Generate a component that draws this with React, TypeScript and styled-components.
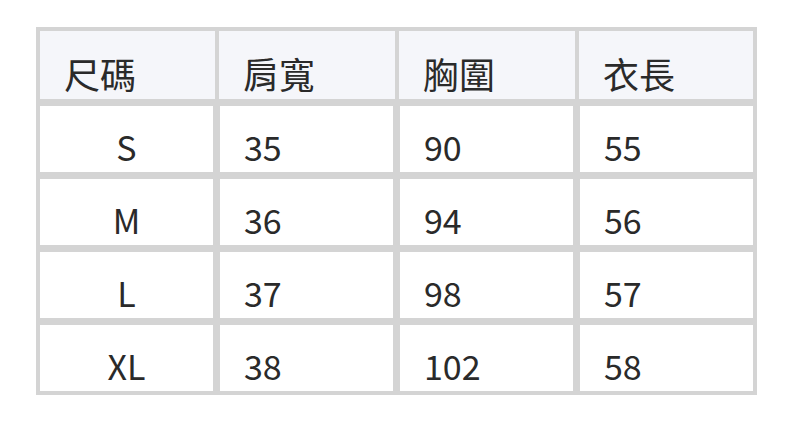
import styled, { createGlobalStyle } from 'styled-components'

const GlobalStyle = createGlobalStyle`
  html, body {
    margin: 0;
    padding: 0;
    background: #ffffff;
  }
  body {
    font-family: "Noto Sans CJK TC", "Noto Sans", sans-serif;
    color: #2a2a2a;
  }
`

const Page = styled.div`
  width: 792px;
  height: 422px;
  padding: 27px 0 0 36px;
  box-sizing: border-box;
`

const Frame = styled.div`
  width: 721px;
  box-sizing: border-box;
  background: #d4d4d4;
  padding: 4px;
  display: flex;
  flex-direction: column;
  gap: 7px;
`

const HeaderRow = styled.div`
  display: grid;
  grid-template-columns: 175px 176px 176px 174px;
  gap: 4px;
`

const BodyRow = styled.div`
  display: grid;
  grid-template-columns: repeat(4, 173px);
  gap: 7px;
`

const HeadCell = styled.div`
  height: 68px;
  box-sizing: border-box;
  background: #f5f6fa;
  display: flex;
  align-items: flex-end;
  padding: 0 0 0 24px;
  font-size: 36px;
  line-height: normal;
`

const Cell = styled.div<{ center?: boolean }>`
  height: 66px;
  box-sizing: border-box;
  background: #ffffff;
  display: flex;
  align-items: flex-end;
  justify-content: ${p => (p.center ? 'center' : 'flex-start')};
  padding: ${p => (p.center ? '0 0 1px 0' : '0 0 1px 24px')};
  font-size: 34px;
  line-height: normal;
`

const headers = ['尺碼', '肩寬', '胸圍', '衣長']

const rows = [
  ['S', '35', '90', '55'],
  ['M', '36', '94', '56'],
  ['L', '37', '98', '57'],
  ['XL', '38', '102', '58'],
]

export default function App() {
  return (
    <>
      <GlobalStyle />
      <Page>
        <Frame>
          <HeaderRow>
            {headers.map(h => (
              <HeadCell key={h}>{h}</HeadCell>
            ))}
          </HeaderRow>
          {rows.map(row => (
            <BodyRow key={row[0]}>
              {row.map((value, i) => (
                <Cell key={i} center={i === 0}>
                  {value}
                </Cell>
              ))}
            </BodyRow>
          ))}
        </Frame>
      </Page>
    </>
  )
}
